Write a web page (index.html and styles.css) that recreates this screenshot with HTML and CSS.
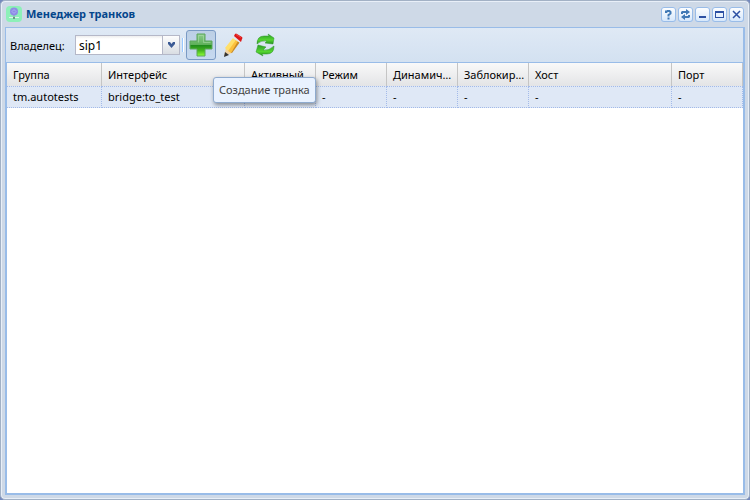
FILE: index.html
```
<!DOCTYPE html>
<html lang="ru">
<head>
    <meta charset="UTF-8">
    <meta name="viewport" content="width=device-width, initial-scale=1.0">
    <title>Менеджер транков</title>
    <link rel="stylesheet" href="styles.css">
</head>
<body>
    <div class="window">
        <div class="window-header">
            <svg class="window-icon" viewBox="0 0 16 16" aria-hidden="true">
                <rect width="16" height="16" rx="4" fill="#8df0b8"/>
                <path d="M8 8v4" stroke="#8f9ac0" stroke-width="1"/>
                <circle cx="8" cy="5.500" r="4" fill="#8f8ce6"/>
                <path d="M6 5.500l2-2 2 2-2 2z" fill="none" stroke="#a9b4f5"/>
                <path d="M3 11.500h10" stroke="#dff5ea"/>
                <path d="M7 11h2v2H7z" fill="#6a9a80"/>
            </svg>
            <h1 class="window-title">Менеджер транков</h1>
            <div class="tools">
                <button type="button" class="tool" aria-label="Справка">
                    <svg viewBox="0 0 15 15"><path d="M5 6V4.500h1L6.500 4h2L9.500 5v1.500L7.500 8v1.500M7.500 10.500v2" fill="none" stroke="#4079b5" stroke-width="2"/></svg>
                </button>
                <button type="button" class="tool" aria-label="Обновить окно">
                    <svg viewBox="0 0 15 15"><path d="M3 7V5l1-1h4V2l4 3-4 3V6H5v1zM12 8v2l-1 1H7v2l-4-3 4-3v2h3V8z" fill="#4079b5"/></svg>
                </button>
                <button type="button" class="tool" aria-label="Свернуть">
                    <svg viewBox="0 0 15 15"><path d="M4 9h7v2H4z" fill="#2c50a3"/></svg>
                </button>
                <button type="button" class="tool" aria-label="Развернуть">
                    <svg viewBox="0 0 15 15"><path d="M3 4h9v7H3zM4 6v4h7V6z" fill="#2c50a3" fill-rule="evenodd"/></svg>
                </button>
                <button type="button" class="tool" aria-label="Закрыть">
                    <svg viewBox="0 0 15 15"><path d="M4 4l7 7M11 4l-7 7" stroke="#2c50a3" stroke-width="1.500"/></svg>
                </button>
            </div>
        </div>

        <div class="window-body">
            <div class="toolbar">
                <label class="toolbar-label" for="owner">Владелец:</label>
                <div class="combo">
                    <input type="text" id="owner" class="combo-input" value="sip1">
                    <button type="button" class="combo-trigger" aria-label="Открыть список">
                        <svg viewBox="0 0 9 6"><path d="M1 0h2l1.500 2L6 0h2v2L4.500 6 1 2z" fill="#3b5a94"/></svg>
                    </button>
                </div>
                <span class="separator"></span>
                <div class="action-wrap">
                    <button type="button" class="action active" aria-label="Создание транка" aria-describedby="tip">
                        <svg viewBox="0 0 24 24">
                            <defs>
                                <linearGradient id="plus" x1="0" y1="0" x2="0" y2="1">
                                    <stop offset="0" stop-color="#8ccc8c"/>
                                    <stop offset="0.48" stop-color="#5fb05a"/>
                                    <stop offset="0.52" stop-color="#218c1c"/>
                                    <stop offset="0.75" stop-color="#45b51f"/>
                                    <stop offset="1" stop-color="#8eff38"/>
                                </linearGradient>
                            </defs>
                            <path d="M8 1h8v7h7v8h-7v7H8v-7H1V8h7z" fill="url(#plus)" stroke="#5da65c"/>
                            <path d="M9.500 9.500v-7h5v7h7" fill="none" stroke="#b5e0b2" stroke-opacity="0.500"/>
                        </svg>
                    </button>
                    <div class="tooltip" id="tip" role="tooltip">Создание транка</div>
                </div>
                <button type="button" class="action" aria-label="Редактирование транка">
                    <svg viewBox="0 0 24 24">
                        <path d="M3 23l2-8 6 5z" fill="#f1d2a0"/>
                        <path d="M3 24l1-5 4 3z" fill="#333"/>
                        <path d="M4 15L12 5l4 3L7 18z" fill="#ffe06a"/>
                        <path d="M7 18L15 7l3 2-8 11z" fill="#fbc03c"/>
                        <path d="M10 20l7-12 2 1-8 11z" fill="#c98a22"/>
                        <path d="M12 5l1-2 7 5-1 2z" fill="#e5e5e8"/>
                        <path d="M13 3l1-2q1-1 2 0l5 3q1 1 0 2l-1 3z" fill="#dc1719"/>
                        <path d="M15 1.500l5 3" stroke="#f0453e"/>
                    </svg>
                </button>
                <button type="button" class="action" aria-label="Обновить">
                    <svg viewBox="0 0 24 24">
                        <defs>
                            <linearGradient id="arrow" x1="0" y1="0" x2="0" y2="1">
                                <stop offset="0" stop-color="#2b9e28"/>
                                <stop offset="0.6" stop-color="#55d630"/>
                                <stop offset="1" stop-color="#248f20"/>
                            </linearGradient>
                        </defs>
                        <path d="M4 11Q4 3 11 3h5l-1-2 6 4-1 6-8-1 2-2Q8 7 4 11z" fill="url(#arrow)" stroke="#2c9427" stroke-width="0.500"/>
                        <path d="M21 13q0 8-7 8H9l1 2-7-4 2-7 8 2-3 3q6 1 11-4z" fill="url(#arrow)" stroke="#2c9427" stroke-width="0.500"/>
                    </svg>
                </button>
            </div>

            <table class="grid">
                <colgroup>
                    <col class="col-group">
                    <col class="col-wide">
                    <col class="col-flag">
                    <col class="col-flag">
                    <col class="col-flag">
                    <col class="col-flag">
                    <col class="col-wide">
                    <col class="col-flag">
                </colgroup>
                <thead>
                    <tr>
                        <th>Группа</th>
                        <th>Интерфейс</th>
                        <th>Активный</th>
                        <th>Режим</th>
                        <th>Динамический</th>
                        <th>Заблокирован</th>
                        <th>Хост</th>
                        <th>Порт</th>
                    </tr>
                </thead>
                <tbody>
                    <tr>
                        <td>tm.autotests</td>
                        <td>bridge:to_test</td>
                        <td>-</td>
                        <td>-</td>
                        <td>-</td>
                        <td>-</td>
                        <td>-</td>
                        <td>-</td>
                    </tr>
                </tbody>
            </table>
        </div>
    </div>
</body>
</html>
```
FILE: styles.css
```
* {
    box-sizing: border-box;
}

body {
    margin: 0;
    background-color: #7489bd;
    font-family: Tahoma, "Noto Sans", sans-serif;
    font-size: 11px;
    color: #000;
}

button {
    padding: 0;
    cursor: pointer;
}

svg {
    display: block;
}

.window {
    display: flex;
    flex-direction: column;
    height: 100vh;
    padding: 0 4px 4px;
    border: 1px solid #a2b1c5;
    border-radius: 5px;
    background-color: #ced9e7;
    box-shadow: inset 0 0 0 1px #e8eff8;
}

.window-header {
    display: flex;
    align-items: center;
    height: 26px;
    padding: 0 1px;
}

.window-icon {
    width: 16px;
    height: 16px;
    margin-right: 4px;
}

.window-title {
    flex: 1;
    margin: 0;
    font-size: 11px;
    line-height: 16px;
    color: #04468c;
}

.tools {
    display: flex;
    gap: 2px;
}

.tool {
    width: 15px;
    height: 15px;
    border: none;
    border-radius: 3px;
    background: linear-gradient(#fff, #d3e6fb);
    box-shadow: inset 0 0 0 1px #99bce8;
}

.window-body {
    display: flex;
    flex: 1;
    flex-direction: column;
    border: 1px solid #99bce8;
    border-width: 1px 2px 2px 1px;
    background-color: #fff;
    box-shadow: inset 1px 0 0 #99bce8;
}

.toolbar {
    display: flex;
    align-items: center;
    height: 35px;
    padding: 0 4px;
    border-bottom: 1px solid #99bce8;
    background: linear-gradient(#dfe9f5, #d3e1f1);
}

.toolbar-label {
    width: 65px;
}

.combo {
    display: flex;
    width: 105px;
    height: 20px;
}

.combo-input {
    flex: 1;
    min-width: 0;
    padding: 0 3px;
    border: 1px solid #b5b8c8;
    background: linear-gradient(#eee, #fff 3px);
    font-family: inherit;
    font-size: 12px;
    outline: none;
}

.combo-trigger {
    display: flex;
    align-items: center;
    justify-content: center;
    width: 17px;
    border: 1px solid #b5b8c8;
    border-left: none;
    background: linear-gradient(#fdfdfd, #d9dde2);
}

.combo-trigger svg {
    width: 9px;
    height: 6px;
}

.separator {
    width: 2px;
    height: 14px;
    margin: 0 2px;
    border-left: 1px solid #98c8ff;
    border-right: 1px solid #fff;
}

.action-wrap {
    position: relative;
}

.action {
    display: flex;
    align-items: center;
    justify-content: center;
    width: 30px;
    height: 30px;
    margin-right: 2px;
    border: 1px solid transparent;
    border-radius: 3px;
    background: none;
}

.action svg {
    width: 24px;
    height: 24px;
}

.action.active {
    border-color: #7a9ac4;
    background: linear-gradient(#bccfe5, #c6d9f0);
}

.tooltip {
    position: absolute;
    top: 47px;
    left: 27px;
    z-index: 1;
    padding: 4px 5px;
    border: 1px solid #8eaace;
    border-radius: 3px;
    background-color: #e9f2ff;
    box-shadow: 1px 2px 4px rgba(0, 0, 0, 0.4);
    line-height: 16px;
    color: #444;
    white-space: nowrap;
}

.grid {
    width: 100%;
    table-layout: fixed;
    border-collapse: separate;
    border-spacing: 0;
    border-left: 1px solid #99bce8;
}

.col-group {
    width: 95px;
}

.col-wide {
    width: 143px;
}

.col-flag {
    width: 71px;
}

.grid th,
.grid td {
    height: 22px;
    padding: 0 2px 0 6px;
    overflow: hidden;
    font-weight: normal;
    line-height: 16px;
    text-align: left;
    text-overflow: ellipsis;
    white-space: nowrap;
}

.grid th {
    height: 23px;
    border-right: 1px solid #c5c5c5;
    background: linear-gradient(#f9f9f9, #e3e4e6);
}

.grid td {
    border: 1px dotted #a3bae9;
    border-left: none;
    background-color: #dfe8f6;
}
```
